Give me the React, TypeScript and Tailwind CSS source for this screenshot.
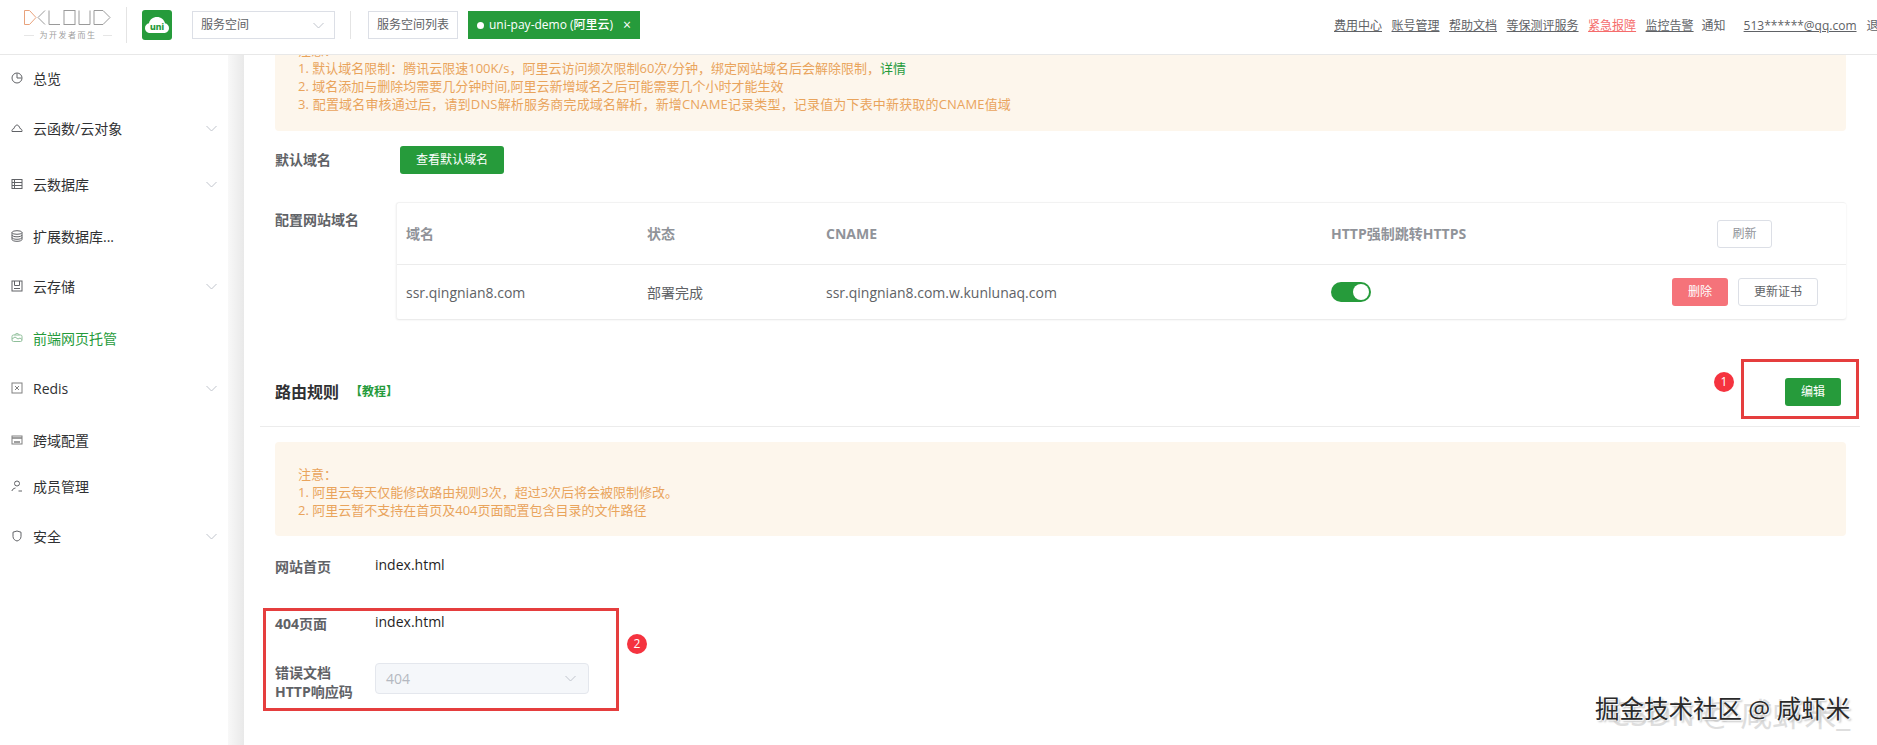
import React from "react";

const Chevron = () => (
  <svg width="11" height="7" viewBox="0 0 11 7" className="shrink-0" fill="none" stroke="#c0c4cc" strokeWidth="1">
    <polyline points="0.5,1 5.5,6 10.5,1" />
  </svg>
);

const I = ({ children, color = "#606266" }: { children: React.ReactNode; color?: string }) => (
  <svg width="12" height="12" viewBox="0 0 12 12" fill="none" stroke={color} strokeWidth="1" className="shrink-0">
    {children}
  </svg>
);

const icons: Record<string, React.ReactNode> = {
  pie: (<I><circle cx="6" cy="6" r="5" /><path d="M6 1.500V6H10.500" /></I>),
  cloud: (<I><path d="M1 9.500h10c.3-1.500-.6-2.800-2-3C8.400 4.500 7.300 3 6 3S3.600 4.500 3 6.500c-1.400.2-2.300 1.500-2 3z" /></I>),
  table: (<I><rect x="1" y="1.500" width="10" height="9" /><path d="M1 4.500h10M1 7.500h10M3.500 1.500v9" /></I>),
  db: (<I><ellipse cx="6" cy="2.500" rx="5" ry="1.800" /><path d="M1 2.500v7c0 1 2.200 1.800 5 1.800s5-.8 5-1.800v-7M1 5c0 1 2.200 1.800 5 1.800S11 6 11 5M1 7.500c0 1 2.200 1.800 5 1.800s5-.8 5-1.800" /></I>),
  disk: (<I><rect x="1" y="1" width="10" height="10" /><path d="M3.500 1v4.500h5V1M3 8.500h6" /></I>),
  host: (<I color="#8fbf9a"><rect x="1" y="3" width="10" height="6.500" rx="1.500" /><path d="M1 7l3-2 3 2 2-1 2 1.500M4 3c0-1 .8-1.500 2-1.500s2 .5 2 1.500" /></I>),
  redis: (<I color="#808080"><rect x="1" y="1" width="10" height="10" /><path d="M4 4l4 4M8 4l-4 4" /></I>),
  win: (<I color="#808080"><rect x="1" y="2" width="10" height="8" /><path d="M1 4h10M3 8h6" strokeWidth="1.500" /></I>),
  user: (<I><circle cx="6" cy="3.500" r="2.500" /><path d="M1 11c0-1.500 1.500-2.500 3.500-3M11 11H7.500" /></I>),
  shield: (<I><path d="M2 2.200 6 1l4 1.200v4.300c0 2.500-2 4-4 4.500-2-.5-4-2-4-4.500z" /></I>),
};

type Item = { label: string; icon: string; h: string; chev?: boolean; active?: boolean };
const menu: Item[] = [
  { label: "总览", icon: "pie", h: "h-[46px]" },
  { label: "云函数/云对象", icon: "cloud", h: "h-[54px]", chev: true },
  { label: "云数据库", icon: "table", h: "h-[58px]", chev: true },
  { label: "扩展数据库...", icon: "db", h: "h-[46px]" },
  { label: "云存储", icon: "disk", h: "h-[54px]", chev: true },
  { label: "前端网页托管", icon: "host", h: "h-[50px]", active: true },
  { label: "Redis", icon: "redis", h: "h-[50px]", chev: true },
  { label: "跨域配置", icon: "win", h: "h-[54px]" },
  { label: "成员管理", icon: "user", h: "h-[38px]" },
  { label: "安全", icon: "shield", h: "h-[62px]", chev: true },
];

const Logo = () => (
  <div className="w-[88px] h-[34px] shrink-0 flex flex-col items-center">
    <svg width="88" height="15" viewBox="0 0 88 15" fill="none" strokeWidth="1" className="mt-[2px]">
      <path d="M0.500 0.500h5l6.500 7-6.500 7h-5z" stroke="#e8a27c" />
      <path d="M21 0.500 14 7.500l7 7" stroke="#9a9a9a" />
      <path d="M25 0.500v14h11" stroke="#9a9a9a" />
      <rect x="40" y="0.500" width="11" height="14" stroke="#9a9a9a" />
      <path d="M55 0.500v14h11v-14" stroke="#9a9a9a" />
      <path d="M70 0.500h9l7 7-7 7h-9z" stroke="#9a9a9a" />
    </svg>
    <div className="mt-[3px] flex items-center gap-[6px] w-full">
      <div className="flex-1 h-px bg-[#e6e6e6]" />
      <span className="text-[8px] leading-[14px] tracking-[1.500px] text-[#a0a0a0] whitespace-nowrap">为开发者而生</span>
      <div className="flex-1 h-px bg-[#e6e6e6]" />
    </div>
  </div>
);

const UniLogo = () => (
  <svg width="30" height="30" viewBox="0 0 30 30" className="shrink-0">
    <rect width="30" height="30" rx="3" fill="#269b3b" />
    <path d="M8 23c-3 0-5-2.300-5-5 0-2.400 1.700-4.300 4-4.800C7.700 9.500 11 7 15 7s7 2.500 8 6.200c2.300.5 4 2.400 4 4.800 0 2.700-2 5-5 5z" fill="#fff" />
    <text x="15" y="20" textAnchor="middle" fontSize="9" fontWeight="800" fill="#269b3b" fontFamily="Inter, sans-serif">uni</text>
  </svg>
);

const Notice = ({ className, children }: { className: string; children: React.ReactNode }) => (
  <div className={`bg-[#fdf6ec] rounded-[4px] pl-[23px] text-[13px] leading-[18px] text-[#e9a45c] ${className}`}>{children}</div>
);

const links = ["费用中心", "账号管理", "帮助文档", "等保测评服务"];

export default function App() {
  return (
    <div className="relative w-[1877px] h-[745px] overflow-hidden bg-white flex flex-col [font-family:'Open_Sans','Noto_Sans_CJK_SC',sans-serif]">
      <header className="h-[55px] shrink-0 flex items-center pl-[24px] pb-[4px] border-b border-[#e8e8e8] overflow-hidden bg-white">
        <Logo />
        <div className="w-px h-[36px] bg-[#e4e4e4] ml-[14px] shrink-0" />
        <div className="ml-[15px]"><UniLogo /></div>
        <div className="ml-[20px] w-[143px] h-[28px] shrink-0 border border-[#dcdfe6] flex items-center justify-between pl-[8px] pr-[10px] text-[12px] text-[#606266]">
          <span>服务空间</span>
          <Chevron />
        </div>
        <div className="w-px h-[28px] bg-[#e4e4e4] ml-[15px] shrink-0" />
        <div className="ml-[17px] w-[90px] h-[28px] shrink-0 border border-[#dcdfe6] flex items-center justify-center text-[12px] text-[#606266]">服务空间列表</div>
        <div className="ml-[10px] w-[172px] h-[28px] shrink-0 bg-[#269b3b] text-white flex items-center text-[12px] font-medium pl-[9px]">
          <span className="w-[7px] h-[7px] rounded-full bg-white mr-[5px]" />
          <span className="whitespace-nowrap">uni-pay-demo (阿里云)</span>
          <span className="ml-[10px] text-[14px] leading-none">×</span>
        </div>
        <nav className="ml-[694px] mt-[2px] shrink-0 flex items-center text-[12px] text-[#606266] whitespace-nowrap">
          <div className="flex gap-[9.500px]">
            {links.map((l) => (<span key={l} className="underline">{l}</span>))}
            <span className="underline text-[#f56c6c]">紧急报障</span>
            <span className="underline">监控告警</span>
          </div>
          <span className="ml-[8px]">通知</span>
          <span className="ml-[18px] underline">513******@qq.com</span>
          <span className="ml-[10px]">退出</span>
        </nav>
      </header>

      <div className="flex flex-1 min-h-0">
        <aside className="w-[228px] shrink-0 bg-white">
          {menu.map((m) => (
            <div key={m.label} className={`${m.h} flex items-center pl-[11px] pr-[11px] text-[14px] ${m.active ? "text-[#269b3b]" : "text-[#303133]"}`}>
              {icons[m.icon]}
              <span className="ml-[10px] flex-1">{m.label}</span>
              {m.chev && <Chevron />}
            </div>
          ))}
        </aside>
        <div className="w-[16px] shrink-0 bg-gradient-to-r from-[#f8f8f8] to-[#e9e9e9]" />

        <main className="flex-1 min-w-0 pl-[31px] pr-[31px] overflow-hidden">
          <Notice className="-mt-[37px] h-[113px] pt-[23px]">
            <p>注意：</p>
            <p>1. 默认域名限制：腾讯云限速100K/s，阿里云访问频次限制60次/分钟，绑定网站域名后会解除限制，<span className="text-[#269b3b]">详情</span></p>
            <p>2. 域名添加与删除均需要几分钟时间,阿里云新增域名之后可能需要几个小时才能生效</p>
            <p className="tracking-[0.17px]">3. 配置域名审核通过后，请到DNS解析服务商完成域名解析，新增CNAME记录类型，记录值为下表中新获取的CNAME值域</p>
          </Notice>

          <div className="mt-[15px] flex items-center h-[28px]">
            <span className="w-[125px] text-[14px] font-bold -mt-[2px] text-[#606266]">默认域名</span>
            <button className="w-[104px] h-[28px] bg-[#269b3b] rounded-[3px] text-white text-[12px]">查看默认域名</button>
          </div>

          <div className="mt-[28px] flex items-start">
            <span className="w-[121px] shrink-0 text-[14px] leading-[20px] mt-[8px] font-bold text-[#606266]">配置网站域名</span>
            <div className="flex-1 h-[117px] border-t border-l border-[#f2f2f2] rounded-[3px] shadow-[0_1px_2px_rgba(0,0,0,0.1)] text-[14px]">
              <div className="h-[62px] flex items-center border-b border-[#ececec] font-bold text-[#909399]">
                <span className="w-[250px] pl-[9px]">域名</span>
                <span className="w-[179px]">状态</span>
                <span className="w-[505px]">CNAME</span>
                <span className="w-[386px]">HTTP强制跳转HTTPS</span>
                <button className="w-[55px] h-[28px] border border-[#dcdfe6] rounded-[3px] bg-white text-[12px] font-normal text-[#909399]">刷新</button>
              </div>
              <div className="h-[54px] flex items-center text-[#606266]">
                <span className="w-[250px] pl-[9px]">ssr.qingnian8.com</span>
                <span className="w-[179px]">部署完成</span>
                <span className="w-[505px]">ssr.qingnian8.com.w.kunlunaq.com</span>
                <span className="w-[341px]">
                  <span className="relative block w-[40px] h-[20px] rounded-full bg-[#269b3b]">
                    <span className="absolute right-[2px] top-[2px] w-[16px] h-[16px] rounded-full bg-white" />
                  </span>
                </span>
                <button className="w-[56px] h-[28px] rounded-[3px] bg-[#f5737a] text-white text-[12px]">删除</button>
                <button className="ml-[10px] w-[80px] h-[28px] border border-[#dcdfe6] rounded-[3px] bg-white text-[12px] text-[#606266]">更新证书</button>
              </div>
            </div>
          </div>

          <div className="-ml-[15px] -mr-[14px] h-[108px] pt-[59px] pl-[15px] pr-[19px] border-b border-[#ececec] flex items-start justify-between">
            <div className="flex items-center h-[28px]">
              <span className="text-[16px] font-bold text-[#303133]">路由规则</span>
              <span className="ml-[11px] text-[12px] font-bold text-[#269b3b]">【教程】</span>
            </div>
            <button className="w-[56px] h-[28px] bg-[#269b3b] rounded-[3px] text-white text-[12px]">编辑</button>
          </div>

          <Notice className="mt-[15px] h-[94px] pt-[23px]">
            <p>注意：</p>
            <p>1. 阿里云每天仅能修改路由规则3次，超过3次后将会被限制修改。</p>
            <p>2. 阿里云暂不支持在首页及404页面配置包含目录的文件路径</p>
          </Notice>

          <div className="mt-[20px] flex items-center h-[20px] text-[14px]">
            <span className="w-[100px] font-bold text-[#606266]">网站首页</span>
            <span className="text-[#1f1f1f] -mt-[3px]">index.html</span>
          </div>
          <div className="mt-[37px] flex items-center h-[20px] text-[14px]">
            <span className="w-[100px] font-bold text-[#606266]">404页面</span>
            <span className="text-[#1f1f1f] -mt-[3px]">index.html</span>
          </div>
          <div className="mt-[30px] flex items-start">
            <span className="w-[100px] text-[14px] leading-[19px] font-bold text-[#606266]">错误文档<br />HTTP响应码</span>
            <div className="w-[214px] h-[31px] bg-[#f5f7fa] border border-[#e4e7ed] rounded-[4px] flex items-center justify-between pl-[10px] pr-[12px] text-[14px] text-[#b4b8c0]">
              <span>404</span>
              <Chevron />
            </div>
          </div>
        </main>
      </div>

      {/* annotations laid over the page */}
      <div className="absolute left-[1741px] top-[359px] w-[118px] h-[60px] border-[3px] border-[#e53e3e]" />
      <div className="absolute left-[1714px] top-[372px] w-[20px] h-[20px] rounded-full bg-[#f5333f] text-white text-[12px] flex items-center justify-center">1</div>
      <div className="absolute left-[263px] top-[608px] w-[356px] h-[103px] border-[3px] border-[#e53e3e]" />
      <div className="absolute left-[627px] top-[634px] w-[20px] h-[20px] rounded-full bg-[#f5333f] text-white text-[12px] flex items-center justify-center">2</div>

      {/* watermarks */}
      <div className="absolute left-[1610px] top-[692px] text-[32px] leading-[44px] text-[#dedede] whitespace-nowrap">CSDN @ 咸虾米_</div>
      <div className="absolute left-[1595px] top-[692px] text-[24.500px] leading-[34px] text-[#2a2a2a] whitespace-nowrap [text-shadow:1px_1px_1px_#fff,2px_2px_2px_#bbb]">掘金技术社区 @ 咸虾米</div>
    </div>
  );
}
